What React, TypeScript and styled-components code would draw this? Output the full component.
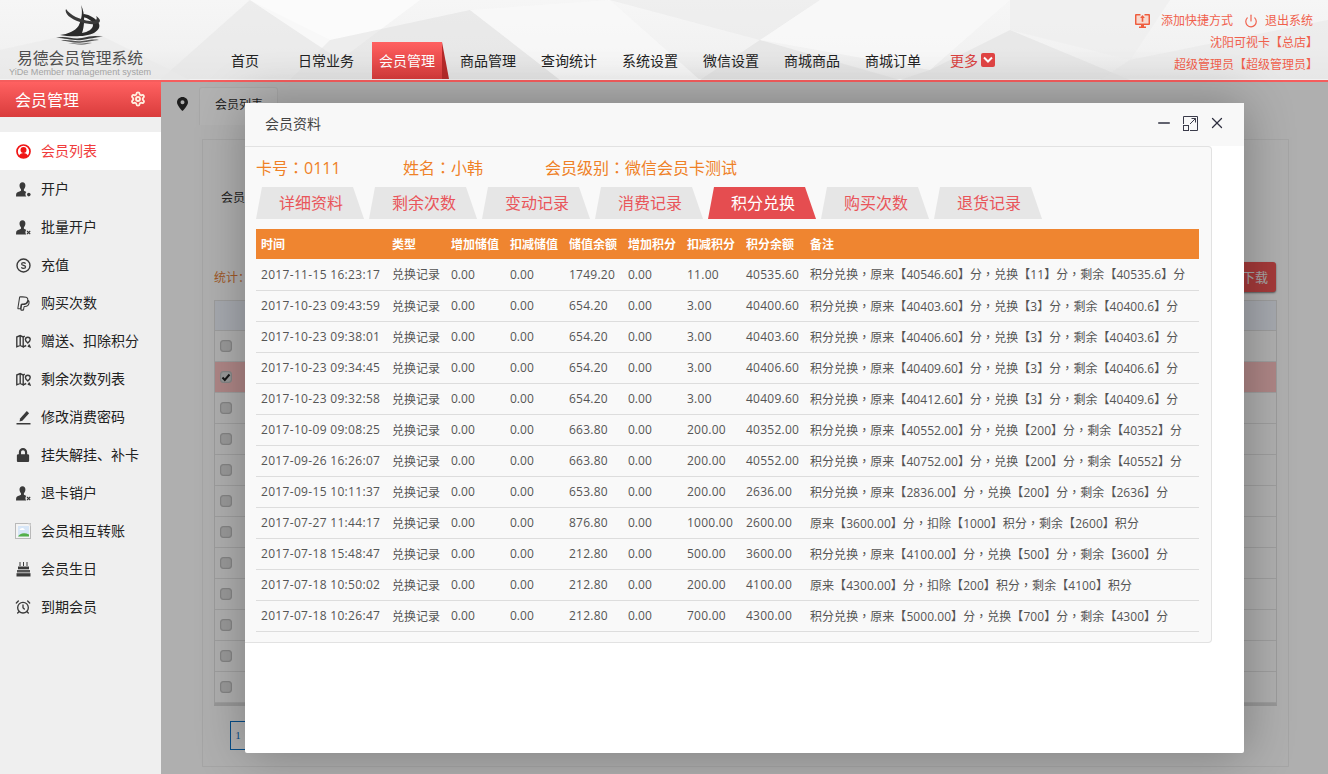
import React from "react";
import styled, { createGlobalStyle } from "styled-components";
import { FaPaypal, FaLock } from "react-icons/fa";
import { AlarmClock, Power, Settings, X, Minus } from "lucide-react";

const FONT = `"Open Sans", "Noto Sans CJK SC", sans-serif`;

const Global = createGlobalStyle`
  html, body { margin: 0; padding: 0; height: 100%; overflow: hidden; }
  body { font-family: ${FONT}; font-size: 12px; color: #333; }
  * { box-sizing: border-box; }
`;

const Shell = styled.div`
  display: flex;
  flex-direction: column;
  width: 1328px;
  height: 774px;
  overflow: hidden;
`;

/* ---------- header ---------- */
const Header = styled.header`
  position: relative;
  display: flex;
  flex: 0 0 82px;
  height: 82px;
  background: linear-gradient(180deg, #f6f6f6 0%, #f2f2f2 60%, #e8e8e8 100%);
  border-bottom: 2px solid #f55d5d;
  box-shadow: inset 0 -1px 0 #fff;
  overflow: hidden;
`;
const HeaderArt = styled.svg`
  position: absolute;
  inset: 0;
  width: 1328px;
  height: 80px;
`;
const Brand = styled.div`
  position: relative;
  flex: 0 0 224px;
  width: 224px;
  padding: 5px 64px 0 0;
  display: flex;
  flex-direction: column;
  align-items: center;
`;
const BrandName = styled.div`
  margin-top: 4px;
  font-size: 15.75px;
  line-height: 18px;
  color: #4e4e4e;
  white-space: nowrap;
`;
const BrandSub = styled.div`
  font-family: "Liberation Sans", sans-serif;
  font-size: 9.1px;
  line-height: 11px;
  color: #a4a4a4;
  white-space: nowrap;
`;
const Nav = styled.nav`
  position: relative;
  display: flex;
  align-items: flex-end;
  height: 79px;
`;
const NavItem = styled.a<{ $active?: boolean; $gap?: number }>`
  position: relative;
  display: block;
  height: 37px;
  padding: 0 7px;
  margin-right: ${(p) => p.$gap ?? 11}px;
  font-size: 14px;
  line-height: 37px;
  white-space: nowrap;
  color: ${(p) => (p.$active ? "#fff" : "#222")};
  background: ${(p) =>
    p.$active ? "linear-gradient(180deg, #ff6060 0%, #d53a3a 100%)" : "transparent"};
  ${(p) =>
    p.$active &&
    `&::after {
      content: "";
      position: absolute;
      left: 100%;
      top: 0;
      width: 7px;
      height: 37px;
      background: #b52a2a;
      clip-path: polygon(0 0, 100% 100%, 0 100%);
    }`}
`;
const MoreItem = styled.a`
  display: flex;
  align-items: center;
  gap: 3px;
  height: 37px;
  margin-left: 11px;
  margin-bottom: 1px;
  font-size: 14px;
  color: #d9413f;
`;
const MoreBadge = styled.span`
  display: inline-flex;
  align-items: center;
  justify-content: center;
  width: 14px;
  height: 14px;
  border-radius: 2px;
  background: #e04444;
`;
const HeaderRight = styled.div`
  position: relative;
  margin-left: auto;
  padding: 10px 15px 0 0;
  display: flex;
  flex-direction: column;
  align-items: flex-end;
  color: #f0604c;
  font-size: 12px;
  line-height: 22px;
  white-space: nowrap;
`;
const QuickRow = styled.div`
  display: flex;
  align-items: center;
`;
const QuickLink = styled.a<{ $iconGap: number }>`
  display: flex;
  align-items: center;
  gap: ${(p) => p.$iconGap}px;
  margin-left: 11px;
`;
const ShopLine = styled.div`
  margin-right: -5px;
`;

/* ---------- body ---------- */
const Body = styled.div`
  display: flex;
  flex: 1;
  min-height: 0;
`;
const Side = styled.aside`
  flex: 0 0 161px;
  width: 161px;
  background: #efefef;
`;
const SideTitle = styled.div`
  display: flex;
  align-items: center;
  justify-content: space-between;
  height: 35px;
  padding: 0 15px 2px;
  font-size: 16px;
  color: #fff;
  background: linear-gradient(180deg, #ff6161 0%, #d93c3c 100%);
`;
const Menu = styled.ul`
  list-style: none;
  margin: 15px 0 0;
  padding: 0;
`;
const MenuItem = styled.li<{ $active?: boolean }>`
  display: flex;
  align-items: center;
  height: 38px;
  padding-left: 15px;
  font-size: 14px;
  line-height: 38px;
  color: ${(p) => (p.$active ? "#f03c3c" : "#222")};
  background: ${(p) => (p.$active ? "#fff" : "transparent")};
`;
const MenuIcon = styled.span`
  display: inline-flex;
  align-items: center;
  justify-content: center;
  flex: 0 0 16px;
  width: 16px;
  height: 16px;
  margin-right: 10px;
  color: #3a3a3a;
`;

/* ---------- page under the dialog ---------- */
const Main = styled.main`
  position: relative;
  flex: 1;
  min-width: 0;
  background: #fbfbfb;
`;
const TabStrip = styled.div`
  display: flex;
  align-items: flex-end;
  height: 43px;
  background: #fbfbfb;
`;
const PinCell = styled.div`
  display: flex;
  align-items: center;
  justify-content: center;
  width: 38px;
  height: 43px;
  padding-left: 4px;
`;
const PageTab = styled.div`
  width: 79px;
  height: 38px;
  padding-left: 15px;
  font-size: 12px;
  line-height: 34px;
  color: #333;
  background: #fff;
  border: 1px solid #f0f0f0;
  border-bottom: 0;
  border-radius: 3px 3px 0 0;
`;
const Card = styled.section`
  margin: 14px 39px 0 41px;
  height: 628px;
  padding: 0 11px;
  background: #fbfbfb;
  border: 1px solid #ececec;
`;
const FilterRow = styled.div`
  height: 122px;
  padding: 47px 0 0 7px;
  font-size: 12px;
  line-height: 22px;
  color: #333;
`;
const ToolRow = styled.div`
  display: flex;
  align-items: center;
  justify-content: space-between;
  height: 30px;
  margin-bottom: 8px;
`;
const Stat = styled.span`
  font-size: 12px;
  color: #e47f3a;
`;
const DownloadBtn = styled.div`
  height: 30px;
  width: 72px;
  padding-left: 38px;
  margin-right: 1px;
  font-size: 13px;
  line-height: 30px;
  color: #eee;
  border-radius: 3px;
  background: #ec5454;
  box-shadow: 0 1px 2px rgba(0, 0, 0, 0.5);
`;
const MemberGrid = styled.div`
  border: 1px solid #e0e0e0;
  border-bottom: 3px solid #d8d8d8;
`;
const MemberHead = styled.div`
  height: 30px;
  background: #eef2fb;
  border-bottom: 1px solid #e0e0e0;
`;
const MemberRow = styled.div<{ $picked?: boolean }>`
  display: flex;
  align-items: center;
  height: 31px;
  padding-left: 5px;
  background: ${(p) => (p.$picked ? "#f9c0c0" : "#fbfbfb")};
  border-bottom: 1px solid #e2e2e2;
`;
const Check = styled.span`
  display: flex;
  align-items: center;
  justify-content: center;
  width: 12px;
  height: 12px;
  border-radius: 3px;
  background: #dcdcdc;
  border: 1px solid #bdbdbd;
  box-shadow: inset 0 0 1px #999;
`;
const PageNum = styled.div`
  width: 16px;
  height: 29px;
  margin: 15px 0 0 16px;
  font-family: "Liberation Serif", serif;
  font-size: 11px;
  line-height: 27px;
  text-align: center;
  color: #0a6fc2;
  border: 1px solid #0a6fc2;
`;

/* ---------- dialog ---------- */
const Shade = styled.div`
  position: absolute;
  inset: 0;
  background: rgba(0, 0, 0, 0.3);
`;
const Dialog = styled.div`
  position: absolute;
  left: 84px;
  top: 21px;
  width: 999px;
  height: 650px;
  background: #fff;
  box-shadow: 1px 1px 50px rgba(0, 0, 0, 0.3);
  border-radius: 2px;
`;
const DialogHead = styled.div`
  display: flex;
  align-items: center;
  justify-content: space-between;
  height: 43px;
  padding: 0 18px 3px 20px;
  font-size: 14px;
  color: #444;
  background: #f8f8f8;
`;
const DialogTools = styled.div`
  display: flex;
  align-items: center;
  gap: 10px;
  color: #2f3040;
`;
const Panel = styled.div`
  width: 967px;
  height: 497px;
  padding: 0 12px 0 10px;
  background: #f9f9f9;
  border: 1px solid #e2e2e2;
  border-left: 0;
  border-radius: 0 4px 4px 0;
`;
const CardInfo = styled.div`
  display: flex;
  height: 40px;
  padding-left: 1px;
  font-size: 16px;
  line-height: 41px;
  color: #ef8127;
`;
const InfoCell = styled.span<{ $w: number }>`
  width: ${(p) => p.$w}px;
  white-space: nowrap;
`;
const Tabs = styled.div`
  display: flex;
  gap: 5px;
  padding-left: 1px;
`;
const TabBtn = styled.div<{ $active?: boolean }>`
  width: 108px;
  height: 32px;
  padding-left: 2px;
  font-size: 16px;
  line-height: 33px;
  text-align: center;
  color: ${(p) => (p.$active ? "#fff" : "#e9555a")};
  background: ${(p) => (p.$active ? "#e54d50" : "#e6e6e6")};
  clip-path: polygon(6px 0, 97px 0, 100% 100%, 0 100%);
`;
const Records = styled.table`
  width: 943px;
  margin: 10px 0 0 1px;
  border-collapse: collapse;
  table-layout: fixed;
`;
const Th = styled.th`
  height: 30px;
  padding: 0 0 0 5px;
  font-size: 12px;
  font-weight: 700;
  text-align: left;
  white-space: nowrap;
  color: #fff;
  background: #ef8530;
`;
const Td = styled.td<{ $track?: number }>`
  height: 31px;
  padding: 0 0 0 5px;
  font-size: 12px;
  letter-spacing: ${(p) => p.$track ?? 0}px;
  white-space: nowrap;
  color: #555;
  border-bottom: 1px solid #ddd;
`;
const Mid = styled.span`
  font-family: "Noto Sans CJK TC", sans-serif;
`;

/* ---------- icons ---------- */
const PersonIcon = ({ mark }: { mark: "dot" | "x" | "slash" }) => (
  <svg width="15" height="15" viewBox="0 0 15 15">
    <path
      fill="#3a3a3a"
      d="M6.500 .3C4.600 .3 3.500 1.700 3.500 3.600c0 1.500.6 2.800 1.500 3.700v1.400C3 9.600.7 10.200.2 11.800L0 14.500h10.300c-.6-.6-.9-1.400-.9-2.200 0-.9.3-1.600.9-2.200-.8-.6-1.700-1.100-2.400-1.400V7.300c.9-.9 1.500-2.200 1.500-3.700C9.400 1.700 8.400 .3 6.500 .3z"
    />
    {mark === "dot" && <circle cx="12.800" cy="12.600" r="1.800" fill="#3a3a3a" />}
    {mark === "x" && (
      <path d="M11 11l3.200 3M14.200 11L11 14" stroke="#3a3a3a" strokeWidth="1.100" />
    )}
    {mark === "slash" && (
      <path d="M11 14l3.200-3.200" stroke="#3a3a3a" strokeWidth="1.500" />
    )}
  </svg>
);
const ActiveUser = () => (
  <svg width="15" height="15" viewBox="0 0 15 15">
    <circle cx="7.500" cy="7.500" r="6.500" fill="none" stroke="#f01414" strokeWidth="1.700" />
    <circle cx="7.500" cy="6" r="3" fill="#f01414" />
    <path d="M2.800 12.500c.8-2.400 2.700-3.400 4.700-3.400s3.900 1 4.700 3.400c-2.500 1.900-6.900 1.900-9.400 0z" fill="#f01414" />
  </svg>
);
const CoinIcon = () => (
  <svg width="15" height="15" viewBox="0 0 15 15" fill="none" stroke="#3a3a3a">
    <circle cx="7.500" cy="7.500" r="6.500" strokeWidth="1.400" />
    <path d="M9.500 5.700c-.3-.8-1.100-1.100-2-1.100-1.100 0-1.900.5-1.900 1.400 0 1.900 4 1 4 3 0 .9-.9 1.400-2.100 1.400-1 0-1.800-.4-2.100-1.200" strokeWidth="1.200" />
  </svg>
);
const MapIcon = () => (
  <svg width="15" height="15" viewBox="0 0 15 15" fill="none" stroke="#3a3a3a" strokeWidth="1.400">
    <path d="M.8 3l3.400-1.400 3 1.400v9.800l-3-1.400L.8 12.800zM4.200 1.800v9.600" />
    <path d="M7.200 3l1.600-.8M7.200 12.800l3-1.300" />
    <path d="M11.800 3.200c-1.500 0-2.400 1-2.400 2.200 0 1.500 2.400 3.600 2.400 3.600s2.400-2.100 2.400-3.600c0-1.200-.9-2.200-2.400-2.200z" />
    <path d="M13 10.500l1 2.400-2.200-.9" />
  </svg>
);
const PenIcon = () => (
  <svg width="15" height="15" viewBox="0 0 15 15">
    <path d="M.5 13h14v1.500H.5z" fill="#3a3a3a" />
    <path d="M3.500 11.500l.6-3L10.800 1l2.300 2.300-6.700 7.500z" fill="#3a3a3a" />
  </svg>
);
const TransferIcon = () => (
  <svg width="16" height="16" viewBox="0 0 16 16">
    <rect x=".5" y=".5" width="15" height="15" fill="#f4f4f4" stroke="#b9b9b9" />
    <rect x="3" y="3" width="11" height="10.500" fill="#d7e6f7" />
    <path d="M3 13.500c1.500-3 6-4.500 11-2v2z" fill="#54b04a" />
    <path d="M4.500 7c.5-1.500 2-2.500 4-1.800L10 7z" fill="#fff" />
    <path d="M12.500 .5h3v3z" fill="#ddd" />
  </svg>
);
const CakeIcon = () => (
  <svg width="15" height="15" viewBox="0 0 15 15" fill="#3a3a3a">
    <path d="M3.500 0h1v4h-1zM7 0h1v4H7zM10.500 0h1v4h-1z" />
    <path d="M2 4.500h11v2.800H2z" />
    <path d="M1 8h13v2.500H1z" fill="#555" />
    <path d="M.5 11.200h14v3.300H.5z" />
  </svg>
);
const PinIcon = () => (
  <svg width="11" height="14" viewBox="0 0 11 14">
    <path
      fillRule="evenodd"
      fill="#2a2a2a"
      d="M5.500 0C2.400 0 0 2.300 0 5.200 0 8.700 5.500 14 5.500 14S11 8.700 11 5.200C11 2.300 8.600 0 5.500 0zm0 3.300a2 2 0 1 1 0 4 2 2 0 0 1 0-4z"
    />
  </svg>
);
const ScreenIcon = () => (
  <svg width="15" height="14" viewBox="0 0 15 14">
    <path fill="#f7d9cf" d="M1.500 1.500h12v8h-12z" />
    <path
      fill="#ef5c3d"
      d="M1 0h4.500v1.500h-4v8h12v-8h-4V0H14a1 1 0 0 1 1 1v9a1 1 0 0 1-1 1H1a1 1 0 0 1-1-1V1a1 1 0 0 1 1-1z"
    />
    <path fill="#ef5c3d" d="M7.500 1l2.300 3H8.300v3.800H6.700V4H5.200z" />
    <path fill="#ef5c3d" d="M6 11h3v1.500h2V14H4v-1.500h2z" />
  </svg>
);
const ExpandIcon = () => (
  <svg width="15" height="15" viewBox="0 0 15 15" fill="none" stroke="#3a3b4a" strokeWidth="1">
    <path d="M.5 8V.5h14v14H7" />
    <rect x=".5" y="9.500" width="5" height="5" />
    <path d="M7 8l5.500-5.500M8.500 2.500h4v4" />
  </svg>
);
const Logo = () => (
  <svg width="50" height="40" viewBox="57 5 50 40">
    <path
      fill="#2b2b2b"
      d="M83 5C85 12 83.500 20 80.500 26 77 31 70 34 62 35 72 37 88 37 96 33 101 30 103 26 100 22 97 18 92 15 86 14L84.500 17C90 18 95 21 95 25 95 29 90 32 84 33 86.500 26 87.500 14 83 5z"
    />
    <path
      fill="#3a3a3a"
      d="M68 9C66 13 72 19 82 22 92 25 101 25 102 21 102 19 100 17 98 16 100 19 98 22 92 21 82 20 72 15 68 9z"
    />
    <path fill="#3a3a3a" d="M58 38C68 35 74 40 84 38 92 36 98 35 105 37 97 37 92 39 84 40 74 41 68 38 58 38z" />
    <path fill="#555" d="M63 40.500C70 39 76 42 84 41 91 40 96 39 101 40 95 40.500 90 42 84 42.500 76 43.500 70 41 63 40.500z" />
    <path fill="#777" d="M70 43C75 42.500 79 44 84 43.500 88 43 91 42.500 94 43 90 43.500 88 44.500 84 44.800 79 45 75 43.500 70 43z" />
  </svg>
);

/* ---------- data ---------- */
const NAV = ["日常业务", "会员管理", "商品管理", "查询统计", "系统设置", "微信设置", "商城商品", "商城订单"];
const MENU: [string, React.ReactNode][] = [
  ["开户", <PersonIcon mark="dot" />],
  ["批量开户", <PersonIcon mark="x" />],
  ["充值", <CoinIcon />],
  ["购买次数", <FaPaypal size={15} fill="none" stroke="#3a3a3a" strokeWidth={36} />],
  ["赠送、扣除积分", <MapIcon />],
  ["剩余次数列表", <MapIcon />],
  ["修改消费密码", <PenIcon />],
  ["挂失解挂、补卡", <FaLock size={14} />],
  ["退卡销户", <PersonIcon mark="x" />],
  ["会员相互转账", <TransferIcon />],
  ["会员生日", <CakeIcon />],
  ["到期会员", <AlarmClock size={16} strokeWidth={2} />],
];
const TABS = ["详细资料", "剩余次数", "变动记录", "消费记录", "积分兑换", "购买次数", "退货记录"];
const COLS = [131, 59, 59, 59, 59, 59, 59, 64, 394];
const HEADS = ["时间", "类型", "增加储值", "扣减储值", "储值余额", "增加积分", "扣减积分", "积分余额", "备注"];
const ROWS: string[][] = [
  ["2017-11-15 16:23:17", "1749.20", "11.00", "40535.60", "积分兑换，原来【40546.60】分，兑换【11】分，剩余【40535.6】分"],
  ["2017-10-23 09:43:59", "654.20", "3.00", "40400.60", "积分兑换，原来【40403.60】分，兑换【3】分，剩余【40400.6】分"],
  ["2017-10-23 09:38:01", "654.20", "3.00", "40403.60", "积分兑换，原来【40406.60】分，兑换【3】分，剩余【40403.6】分"],
  ["2017-10-23 09:34:45", "654.20", "3.00", "40406.60", "积分兑换，原来【40409.60】分，兑换【3】分，剩余【40406.6】分"],
  ["2017-10-23 09:32:58", "654.20", "3.00", "40409.60", "积分兑换，原来【40412.60】分，兑换【3】分，剩余【40409.6】分"],
  ["2017-10-09 09:08:25", "663.80", "200.00", "40352.00", "积分兑换，原来【40552.00】分，兑换【200】分，剩余【40352】分"],
  ["2017-09-26 16:26:07", "663.80", "200.00", "40552.00", "积分兑换，原来【40752.00】分，兑换【200】分，剩余【40552】分"],
  ["2017-09-15 10:11:37", "653.80", "200.00", "2636.00", "积分兑换，原来【2836.00】分，兑换【200】分，剩余【2636】分"],
  ["2017-07-27 11:44:17", "876.80", "1000.00", "2600.00", "原来【3600.00】分，扣除【1000】积分，剩余【2600】积分"],
  ["2017-07-18 15:48:47", "212.80", "500.00", "3600.00", "积分兑换，原来【4100.00】分，兑换【500】分，剩余【3600】分"],
  ["2017-07-18 10:50:02", "212.80", "200.00", "4100.00", "原来【4300.00】分，扣除【200】积分，剩余【4100】积分"],
  ["2017-07-18 10:26:47", "212.80", "700.00", "4300.00", "积分兑换，原来【5000.00】分，兑换【700】分，剩余【4300】分"],
];

/* Centre-set fullwidth punctuation, as the reference's CJK face has it. */
const withMid = (text: string) =>
  text.split(/([，：])/).map((part, i) =>
    part === "，" || part === "：" ? <Mid key={i}>{part}</Mid> : <React.Fragment key={i}>{part}</React.Fragment>
  );

export default function App() {
  return (
    <Shell>
      <Global />
      <Header>
        <HeaderArt viewBox="0 0 1328 80" preserveAspectRatio="none">
          <polygon points="160,80 250,0 330,40 290,80" fill="#e4e4e4" opacity=".5" />
          <polygon points="0,80 0,50 90,30 190,80" fill="#e9e9e9" opacity=".6" />
          <polygon points="250,0 420,0 340,60" fill="#fdfdfd" opacity=".7" />
          <polygon points="330,40 470,10 560,80 290,80" fill="#d9d9d9" opacity=".4" />
          <polygon points="470,10 610,0 700,80 560,80" fill="#fafafa" opacity=".6" />
          <polygon points="610,0 820,0 760,40" fill="#e7e7e7" opacity=".5" />
          <polygon points="700,80 760,40 900,80" fill="#dadada" opacity=".45" />
          <polygon points="820,0 1010,0 930,70 760,40" fill="#f9f9f9" opacity=".7" />
          <polygon points="930,70 1010,30 1130,80 900,80" fill="#dcdcdc" opacity=".45" />
          <polygon points="1010,0 1170,0 1130,60 1010,30" fill="#ececec" opacity=".6" />
          <polygon points="1130,60 1328,20 1328,80 1100,80" fill="#e6e6e6" opacity=".5" />
        </HeaderArt>
        <Brand>
          <Logo />
          <BrandName>易德会员管理系统</BrandName>
          <BrandSub>YiDe Member management system</BrandSub>
        </Brand>
        <Nav>
          <NavItem $gap={25}>首页</NavItem>
          {NAV.map((n, i) => (
            <NavItem key={n} $active={i === 1}>
              {n}
            </NavItem>
          ))}
          <MoreItem>
            更多
            <MoreBadge>
              <svg width="10" height="8" viewBox="0 0 10 8" fill="none" stroke="#fff" strokeWidth="2">
                <path d="M1 1.500l4 4 4-4" />
              </svg>
            </MoreBadge>
          </MoreItem>
        </Nav>
        <HeaderRight>
          <QuickRow>
            <QuickLink $iconGap={11}>
              <ScreenIcon />
              添加快捷方式
            </QuickLink>
            <QuickLink $iconGap={7}>
              <Power size={14} strokeWidth={2} />
              退出系统
            </QuickLink>
          </QuickRow>
          <ShopLine>沈阳可视卡【总店】</ShopLine>
          <ShopLine>超级管理员【超级管理员】</ShopLine>
        </HeaderRight>
      </Header>

      <Body>
        <Side>
          <SideTitle>
            会员管理
            <Settings size={16} color="#fff0e0" strokeWidth={2.8} />
          </SideTitle>
          <Menu>
            <MenuItem $active>
              <MenuIcon>
                <ActiveUser />
              </MenuIcon>
              会员列表
            </MenuItem>
            {MENU.map(([label, icon]) => (
              <MenuItem key={label}>
                <MenuIcon>{icon}</MenuIcon>
                {label}
              </MenuItem>
            ))}
          </Menu>
        </Side>

        <Main>
          <TabStrip>
            <PinCell>
              <PinIcon />
            </PinCell>
            <PageTab>会员列表</PageTab>
          </TabStrip>
          <Card>
            <FilterRow>会员</FilterRow>
            <ToolRow>
              <Stat>统计：</Stat>
              <DownloadBtn>下载</DownloadBtn>
            </ToolRow>
            <MemberGrid>
              <MemberHead />
              {Array.from({ length: 12 }, (_, i) => (
                <MemberRow key={i} $picked={i === 1}>
                  <Check>
                    {i === 1 && (
                      <svg width="10" height="9" viewBox="0 0 10 9" fill="none" stroke="#222" strokeWidth="2">
                        <path d="M1.500 4.500l2.300 2.500L8.500 1.500" />
                      </svg>
                    )}
                  </Check>
                </MemberRow>
              ))}
            </MemberGrid>
            <PageNum>1</PageNum>
          </Card>
          <Shade />
          <Dialog>
            <DialogHead>
              会员资料
              <DialogTools>
                <Minus size={18} strokeWidth={2} />
                <ExpandIcon />
                <X size={18} strokeWidth={1.7} />
              </DialogTools>
            </DialogHead>
            <Panel>
              <CardInfo>
                <InfoCell $w={147}>卡号<Mid>：</Mid>0111</InfoCell>
                <InfoCell $w={142}>姓名<Mid>：</Mid>小韩</InfoCell>
                <InfoCell $w={200}>会员级别<Mid>：</Mid>微信会员卡测试</InfoCell>
              </CardInfo>
              <Tabs>
                {TABS.map((t) => (
                  <TabBtn key={t} $active={t === "积分兑换"}>
                    {t}
                  </TabBtn>
                ))}
              </Tabs>
              <Records>
                <colgroup>
                  {COLS.map((w, i) => (
                    <col key={i} width={w} />
                  ))}
                </colgroup>
                <thead>
                  <tr>
                    {HEADS.map((h) => (
                      <Th key={h}>{h}</Th>
                    ))}
                  </tr>
                </thead>
                <tbody>
                  {ROWS.map((r) => (
                    <tr key={r[0]}>
                      <Td $track={0.32}>{r[0]}</Td>
                      <Td>兑换记录</Td>
                      <Td>0.00</Td>
                      <Td>0.00</Td>
                      <Td $track={0.25}>{r[1]}</Td>
                      <Td>0.00</Td>
                      <Td $track={0.25}>{r[2]}</Td>
                      <Td $track={0.25}>{r[3]}</Td>
                      <Td $track={0.05}>{withMid(r[4])}</Td>
                    </tr>
                  ))}
                </tbody>
              </Records>
            </Panel>
          </Dialog>
        </Main>
      </Body>
    </Shell>
  );
}
